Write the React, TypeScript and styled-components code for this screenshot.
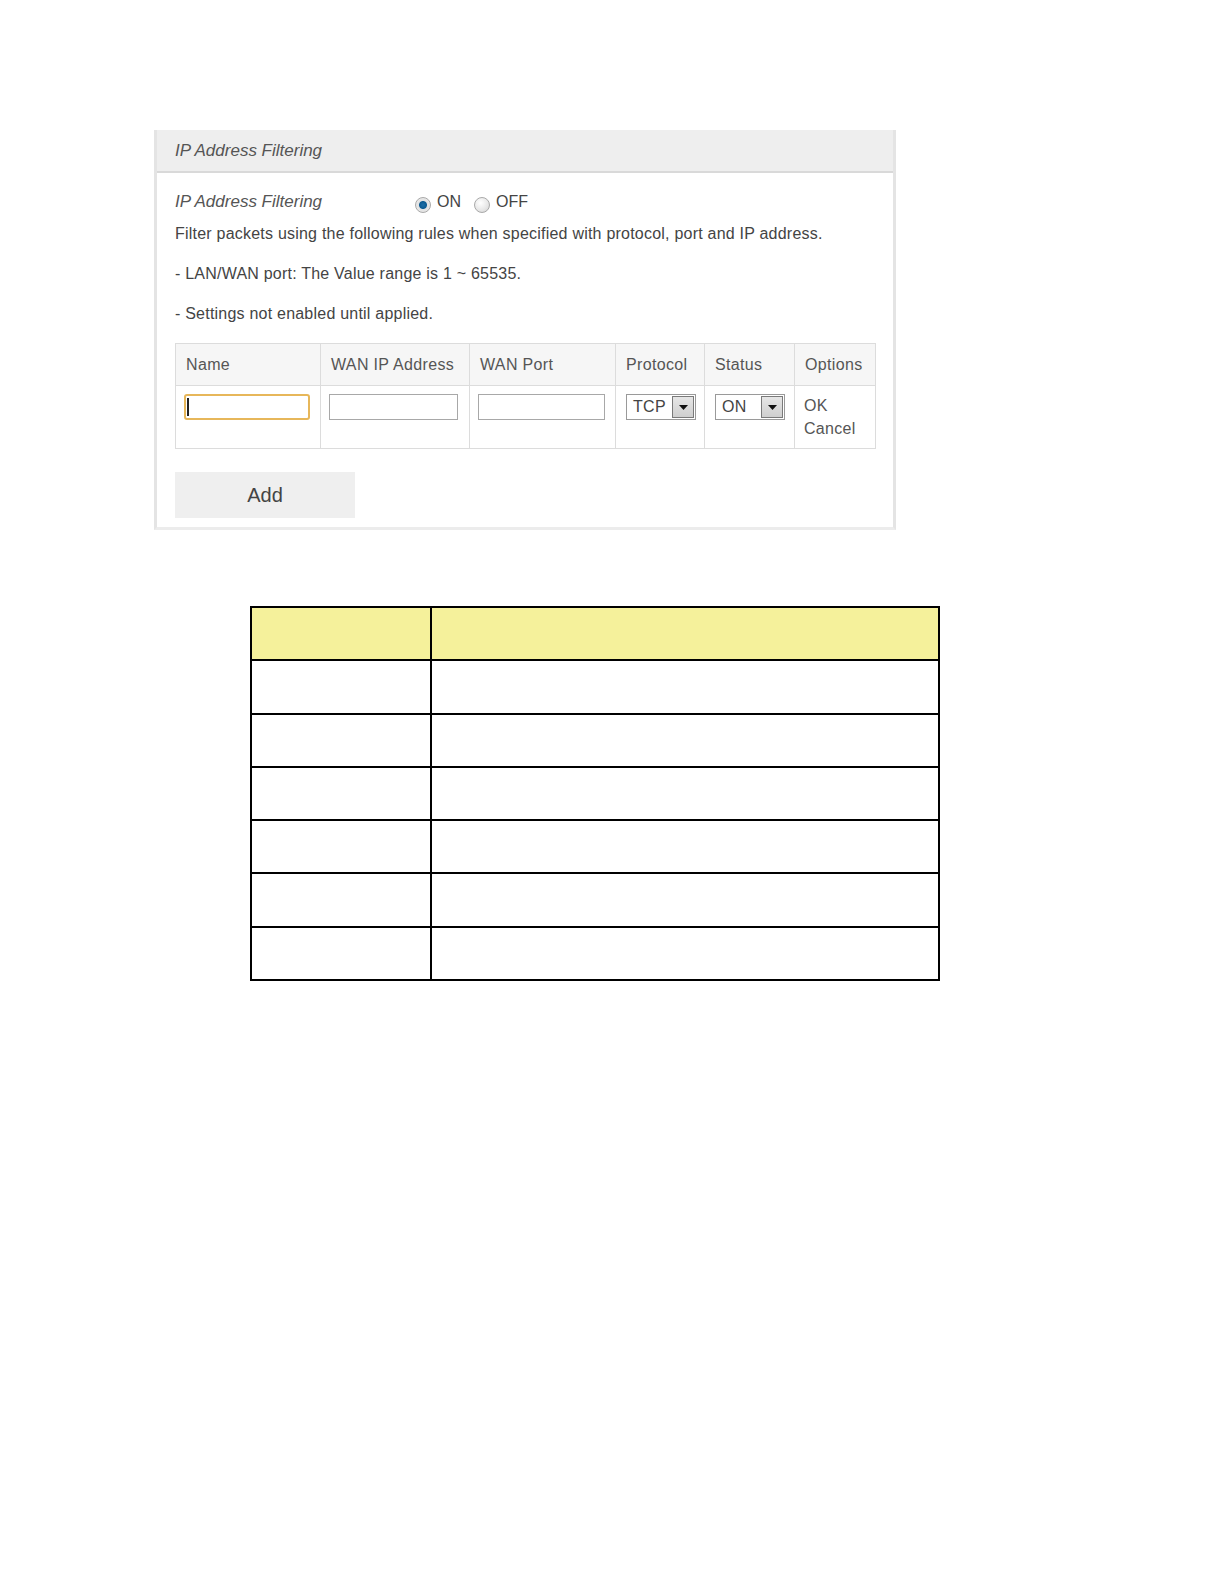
import React from 'react'
import styled, { createGlobalStyle } from 'styled-components';

const GlobalStyle = createGlobalStyle`
  html, body {
    margin: 0;
    padding: 0;
    background: #fff;
  }
  body {
    font-family: "Liberation Sans", Arial, sans-serif;
  }
`;

interface Column {
  title: string;
  width: number;
}

const columns: Column[] = [
  { title: 'Name', width: 145 },
  { title: 'WAN IP Address', width: 149 },
  { title: 'WAN Port', width: 146 },
  { title: 'Protocol', width: 89 },
  { title: 'Status', width: 90 },
  { title: 'Options', width: 81 },
];

const notes: string[] = [
  'Filter packets using the following rules when specified with protocol, port and IP address.',
  '- LAN/WAN port: The Value range is 1 ~ 65535.',
  '- Settings not enabled until applied.',
];

const SelectBox: React.FC<{ value: string }> = ({ value }) => (
  <Select>
    <SelectValue>{value}</SelectValue>
    <SelectButton>
      <svg width="9" height="5" viewBox="0 0 9 5">
        <path d="M0 0 H9 L4.5 5 Z" fill="#111" />
      </svg>
    </SelectButton>
  </Select>
);

const App: React.FC = () => {
  return (
    <Page>
      <GlobalStyle />
      <Panel>
        <PanelHeader>IP Address Filtering</PanelHeader>
        <PanelBody>
          <SwitchRow>
            <SwitchLabel>IP Address Filtering</SwitchLabel>
            <RadioGroup>
              <Radio checked />
              <RadioText>ON</RadioText>
              <Radio />
              <RadioText>OFF</RadioText>
            </RadioGroup>
          </SwitchRow>
          {notes.map((note) => (
            <Note key={note}>{note}</Note>
          ))}
          <RuleTable>
            <colgroup>
              {columns.map((col) => (
                <col key={col.title} style={{ width: col.width }} />
              ))}
            </colgroup>
            <thead>
              <tr>
                {columns.map((col) => (
                  <HeadCell key={col.title}>{col.title}</HeadCell>
                ))}
              </tr>
            </thead>
            <tbody>
              <tr>
                <BodyCell><TextInput $focused $width={126} /></BodyCell>
                <BodyCell><TextInput $width={129} /></BodyCell>
                <BodyCell><TextInput $width={127} /></BodyCell>
                <BodyCell><SelectBox value="TCP" /></BodyCell>
                <BodyCell><SelectBox value="ON" /></BodyCell>
                <BodyCell>
                  <OptionLink>OK</OptionLink>
                  <OptionLink>Cancel</OptionLink>
                </BodyCell>
              </tr>
            </tbody>
          </RuleTable>
          <AddButton>Add</AddButton>
        </PanelBody>
      </Panel>

      <DocTable>
        <tbody>
          <tr>
            <DocCell $head $first />
            <DocCell $head />
          </tr>
          {[0, 1, 2, 3, 4, 5].map((i) => (
            <tr key={i}>
              <DocCell $first />
              <DocCell />
            </tr>
          ))}
        </tbody>
      </DocTable>
    </Page>
  );
};

export default App

const Page = styled.div`
  padding-top: 130px;
  padding-bottom: 40px;
`

const Panel = styled.div`
  margin-left: 154px;
  width: 742px;
  box-sizing: border-box;
  border-left: 3px solid #e4e4e4;
  border-right: 3px solid #e4e4e4;
  border-bottom: 3px solid #ececec;
  background: #fff;
`

const PanelHeader = styled.div`
  height: 41px;
  padding-left: 18px;
  display: flex;
  align-items: center;
  background: #eeeeee;
  border-bottom: 2px solid #d9d9d9;
  color: #555;
  font-size: 17px;
  font-style: italic;
`

const PanelBody = styled.div`
  padding: 17px 18px 9px 18px;
`

const SwitchRow = styled.div`
  display: flex;
  align-items: center;
  height: 24px;
`

const SwitchLabel = styled.div`
  width: 240px;
  color: #555;
  font-size: 17px;
  font-style: italic;
`

const RadioGroup = styled.div`
  display: flex;
  align-items: center;
`

const Radio = styled.span<{ checked?: boolean }>`
  width: 14px;
  height: 14px;
  margin-top: 6px;
  border-radius: 50%;
  border: 1px solid #a9a9a9;
  box-sizing: content-box;
  background: ${(p) =>
    p.checked
      ? 'radial-gradient(circle at 50% 50%, #1f6fa8 0, #0b5b92 3.5px, #e2e2e2 4.5px, #f0f0f0 100%)'
      : 'radial-gradient(circle at 40% 35%, #ffffff 0, #e6e6e6 60%, #cfcfcf 100%)'};
`

const RadioText = styled.span`
  margin: 0 13px 0 6px;
  color: #444;
  font-size: 16px;
`

const Note = styled.div`
  margin-top: 11px;
  color: #444;
  font-size: 16px;
  letter-spacing: 0.22px;
  line-height: 18px;
  & + & {
    margin-top: 22px;
  }
`

const RuleTable = styled.table`
  margin-top: 20px;
  border-collapse: collapse;
  table-layout: fixed;
  width: 700px;
`

const HeadCell = styled.th`
  height: 41px;
  padding: 0 9px 0 10px;
  text-align: left;
  font-weight: normal;
  color: #555;
  font-size: 16px;
  letter-spacing: 0.35px;
  background: #f6f6f6;
  border: 1px solid #dcdcdc;
`

const BodyCell = styled.td`
  height: 63px;
  padding: 8px 8px 0 8px;
  vertical-align: top;
  border: 1px solid #dcdcdc;
  box-sizing: border-box;
  color: #555;
  font-size: 16px;
  letter-spacing: 0.3px;
`

const TextInput = styled.div<{ $focused?: boolean; $width: number }>`
  width: ${(p) => p.$width}px;
  height: 26px;
  box-sizing: border-box;
  border: ${(p) => (p.$focused ? '2px solid #e7b75a' : '1px solid #a8a8a8')};
  border-radius: ${(p) => (p.$focused ? '3px' : '0')};
  background: #fff;
  position: relative;
  ${(p) =>
    p.$focused &&
    `&::before {
      content: '';
      position: absolute;
      left: 1px;
      top: 2px;
      width: 2px;
      height: 18px;
      background: #222;
    }`}
`

const Select = styled.div`
  width: 70px;
  height: 26px;
  margin-left: 2px;
  box-sizing: border-box;
  border: 1px solid #9a9a9a;
  display: flex;
  align-items: center;
  background: #fff;
`

const SelectValue = styled.span`
  flex: 1;
  padding-left: 6px;
  color: #444;
  font-size: 16px;
`

const SelectButton = styled.span`
  width: 22px;
  height: 22px;
  margin-right: 1px;
  box-sizing: border-box;
  border: 1px solid #7a7a7a;
  background: linear-gradient(#e6e6e6, #cfcfcf);
  display: flex;
  align-items: center;
  justify-content: center;
`

const OptionLink = styled.div`
  line-height: 23px;
  padding-left: 1px;
  color: #555;
`

const AddButton = styled.div`
  margin-top: 23px;
  width: 180px;
  height: 46px;
  display: flex;
  align-items: center;
  justify-content: center;
  background: #efefef;
  color: #444;
  font-size: 20px;
`

const DocTable = styled.table`
  margin: 76px 0 0 250px;
  width: 690px;
  border-collapse: collapse;
  table-layout: fixed;
`

const DocCell = styled.td<{ $head?: boolean; $first?: boolean }>`
  height: 51.3px;
  padding: 0;
  border: 2px solid #000;
  width: ${(p) => (p.$first ? '178px' : 'auto')};
  background: ${(p) => (p.$head ? '#f5f19b' : '#fff')};
`
